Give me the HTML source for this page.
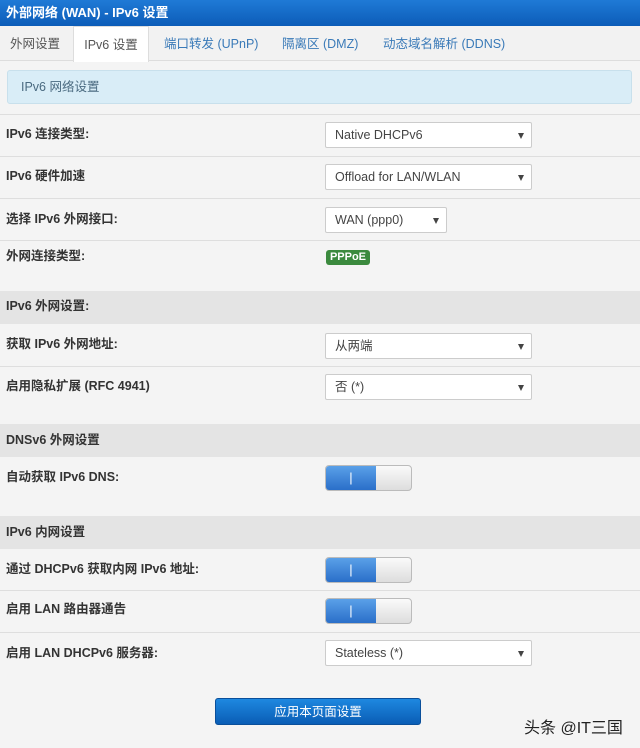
<!DOCTYPE html>
<html><head><meta charset="utf-8"><style>
*{box-sizing:border-box;margin:0;padding:0}
body{width:640px;height:748px;overflow:hidden;background:#f4f4f4;font-family:"Liberation Sans","Noto Sans CJK SC",sans-serif;color:#333;position:relative;font-size:12px}
.hdr{position:absolute;left:0;top:0;width:640px;height:26px;background:linear-gradient(#1f7ad6,#0c5cb8);color:#fff;font-weight:bold;font-size:13px;line-height:25px;padding-left:6px}
.tabs{position:absolute;left:0;top:26px;width:640px;height:35px;background:#f2f2f2;border-bottom:1px solid #ddd}
.tab{position:absolute;top:0;height:35px;line-height:36px;font-size:12.5px;color:#3a7ab8;white-space:nowrap}
.tab.a{background:#fff;color:#555;border:1px solid #ddd;border-bottom:none;height:36px;text-align:center}
.info{position:absolute;left:7px;top:70px;width:625px;height:34px;background:#d9edf7;border:1px solid #c8e0ec;border-radius:3px;color:#4a6a80;font-size:12.5px;line-height:32px;padding-left:13px}
.sep{position:absolute;left:0;width:640px;height:1px;background:#dedede}
.sec{position:absolute;left:0;width:640px;background:#e4e4e4}
.lbl{position:absolute;left:6px;font-size:12.5px;font-weight:bold;color:#333;line-height:16px}
.sel{position:absolute;left:325px;height:26px;background:#fff;border:1px solid #ccc;border-radius:2px;font-size:12.5px;line-height:24px;padding-left:9px;color:#444}
.sel:after{content:"";position:absolute;right:7px;top:10px;border-left:3px solid transparent;border-right:3px solid transparent;border-top:6px solid #444}
.badge{position:absolute;left:326px;top:250px;width:44px;height:15px;background:#3b8a3e;color:#fff;font-weight:bold;font-size:11px;line-height:15px;text-align:center;border-radius:3px}
.tg{position:absolute;left:325px;width:87px;height:26px;border:1px solid #bbb;border-radius:4px;overflow:hidden;background:linear-gradient(#fafafa,#ddd)}
.tg i{position:absolute;left:0;top:0;width:50px;height:24px;background:linear-gradient(#5aa0e8,#2a6fc9);color:#fff;text-align:center;font-style:normal;line-height:24px;font-size:13px}
.btn{position:absolute;left:215px;top:698px;width:206px;height:27px;border-radius:3px;background:linear-gradient(#1e88e0,#0a5db5);color:#fff;font-size:12.5px;text-align:center;line-height:27px;border:1px solid #0a4f9a}
.wm{position:absolute;left:524px;top:714px;font-size:16px;color:#222}
</style></head><body>
<div class="hdr">外部网络 (WAN) - IPv6 设置</div>
<div class="tabs">
<div class="tab" style="left:10px;color:#555">外网设置</div>
<div class="tab a" style="left:73px;width:76px">IPv6 设置</div>
<div class="tab" style="left:164px">端口转发 (UPnP)</div>
<div class="tab" style="left:282px">隔离区 (DMZ)</div>
<div class="tab" style="left:383px">动态域名解析 (DDNS)</div>
</div>
<div class="info">IPv6 网络设置</div>
<div class="sep" style="top:114px"></div>
<div class="lbl" style="top:126px">IPv6 连接类型:</div>
<div class="sel" style="top:122px;width:207px">Native DHCPv6</div>
<div class="sep" style="top:156px"></div>
<div class="lbl" style="top:168px">IPv6 硬件加速</div>
<div class="sel" style="top:164px;width:207px">Offload for LAN/WLAN</div>
<div class="sep" style="top:198px"></div>
<div class="lbl" style="top:211px">选择 IPv6 外网接口:</div>
<div class="sel" style="top:207px;width:122px">WAN (ppp0)</div>
<div class="sep" style="top:240px"></div>
<div class="lbl" style="top:248px">外网连接类型:</div>
<div class="badge">PPPoE</div>
<div class="sec" style="top:291px;height:33px"></div>
<div class="lbl" style="top:298px">IPv6 外网设置:</div>
<div class="lbl" style="top:336px">获取 IPv6 外网地址:</div>
<div class="sel" style="top:333px;width:207px">从两端</div>
<div class="sep" style="top:366px"></div>
<div class="lbl" style="top:378px">启用隐私扩展 (RFC 4941)</div>
<div class="sel" style="top:374px;width:207px">否 (*)</div>
<div class="sec" style="top:424px;height:33px"></div>
<div class="lbl" style="top:432px">DNSv6 外网设置</div>
<div class="lbl" style="top:469px">自动获取 IPv6 DNS:</div>
<div class="tg" style="top:465px"><i>|</i></div>
<div class="sec" style="top:516px;height:33px"></div>
<div class="lbl" style="top:524px">IPv6 内网设置</div>
<div class="lbl" style="top:561px">通过 DHCPv6 获取内网 IPv6 地址:</div>
<div class="tg" style="top:557px"><i>|</i></div>
<div class="sep" style="top:590px"></div>
<div class="lbl" style="top:601px">启用 LAN 路由器通告</div>
<div class="tg" style="top:598px"><i>|</i></div>
<div class="sep" style="top:632px"></div>
<div class="lbl" style="top:645px">启用 LAN DHCPv6 服务器:</div>
<div class="sel" style="top:640px;width:207px">Stateless (*)</div>
<div class="btn">应用本页面设置</div>
<div class="wm">头条 @IT三国</div>
</body></html>
